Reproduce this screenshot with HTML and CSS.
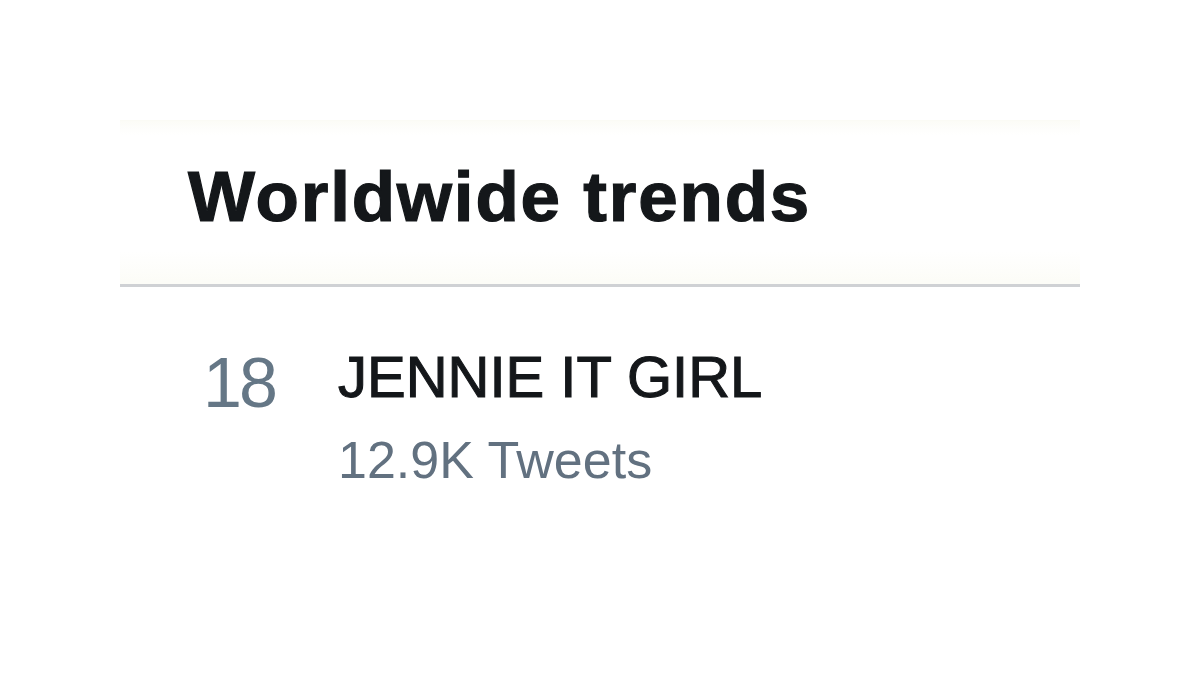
FILE: index.html
```html
<!DOCTYPE html>
<html lang="en">
<head>
<meta charset="utf-8">
<title>Worldwide trends</title>
<link rel="stylesheet" href="styles.css">
</head>
<body>
<main class="panel">
  <header class="head">
    <h1 class="title">Worldwide trends</h1>
  </header>
  <section class="trend">
    <span class="rank">18</span>
    <div class="info">
      <div class="name">JENNIE IT GIRL</div>
      <div class="count">12.9K Tweets</div>
    </div>
  </section>
</main>
</body>
</html>
```
FILE: styles.css
```css
html, body {
  margin: 0;
  padding: 0;
  background: #ffffff;
}
body {
  font-family: "Liberation Sans", Arial, sans-serif;
  width: 1200px;
  height: 675px;
  overflow: hidden;
}
.panel {
  width: 960px;
  margin: 120px auto 0;
}
.head {
  height: 167px;
  box-sizing: border-box;
  padding: 40px 0 0 68px;
  border-top: 1px solid #fbfbf5;
  border-bottom: 3px solid #cfd1d4;
  background: linear-gradient(#fcfcf7 0, #ffffff 14px, #ffffff 130px, #fcfcf7 160px);
}
.title {
  margin: 0;
  font-size: 71px;
  line-height: 71px;
  font-weight: 700;
  color: #14171a;
  letter-spacing: 1.8px;
  -webkit-text-stroke: 1.2px #14171a;
}
.trend {
  display: flex;
  align-items: flex-start;
  padding: 61px 0 0 83px;
}
.rank {
  flex: none;
  width: 135px;
  font-size: 70px;
  line-height: 70px;
  color: #657786;
  letter-spacing: -3px;
}
.info {
  display: flex;
  flex-direction: column;
}
.name {
  font-size: 58px;
  line-height: 58px;
  color: #14171a;
  -webkit-text-stroke: 1.1px #14171a;
}
.count {
  margin-top: 28px;
  font-size: 52px;
  line-height: 52px;
  color: #627180;
}
```
